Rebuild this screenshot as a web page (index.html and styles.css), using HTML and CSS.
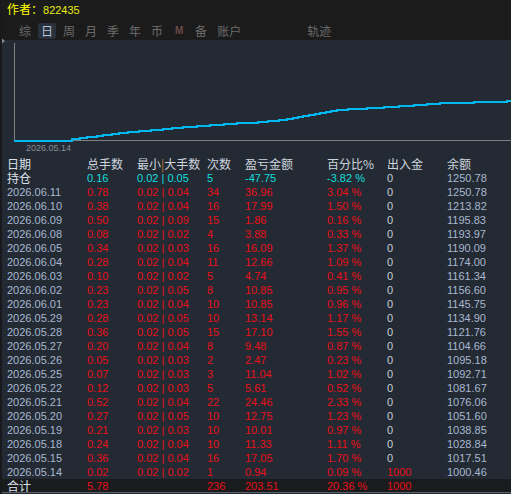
FILE: index.html
```html
<!doctype html>
<html>
 <head>
	<meta charset="UTF-8">
	<title>账户轨迹</title>
	<link rel="stylesheet" href="styles.css">
 </head>
 <body>
	<div class="win">
		<div class="author">作者：<span class="uid">822435</span></div>
		<div class="tabs">
			<span class="tab">综</span>
			<span class="tab tab_on">日</span>
			<span class="tab">周</span>
			<span class="tab">月</span>
			<span class="tab">季</span>
			<span class="tab">年</span>
			<span class="tab">币</span>
			<span class="tab tab_m">M</span>
			<span class="tab">备</span>
			<span class="tab">账户</span>
			<span class="tab tab_far">轨迹</span>
		</div>

		<div class="chart">
			<svg class="curve" width="509" height="103" viewBox="0 0 509 103">
				<line x1="12.5" y1="3" x2="12.5" y2="101" stroke="#7f7f7f" stroke-width="1"/>
				<line x1="12" y1="100.5" x2="509" y2="100.5" stroke="#7f7f7f" stroke-width="1"/>
				<!-- 余额曲线 -->
				<path fill="none" stroke="#00b7f0" stroke-width="2" shape-rendering="crispEdges"
					d="M12,101 H70 V99 H78 V98 H85 V97 H95 V96 H101 V95 H110 V94 H117 V93 H126 V92 H137 V91 H149 V90 H161 V89 H170 V88 H181 V87 H195 V86 H208 V85 H222 V84 H235 V83 H256 V82 H266 V81 H277 V80 H285 V79 H291 V78 H296 V77 H301 V76 H307 V75 H313 V74 H318 V73 H324 V72 H329 V71 H335 V70 H346 V69 H365 V68 H382 V67 H397 V66 H412 V65 H425 V64 H438 V63 H472 V62 H505 V61 H509"/>
			</svg>
			<div class="chart_date">2026.05.14</div>
		</div>

		<div class="list">
			<div class="row row_head">
				<span class="c_big">日期</span><span>总手数</span><span>最小<i class="bar">|</i>大手数</span><span>次数</span><span>盈亏金额</span><span>百分比%</span><span>出入金</span><span>余额</span>
			</div>
			<div class="row row_hold">
				<span class="c_big">持仓</span><span>0.16</span><span>0.02 | 0.05</span><span>5</span><span>-47.75</span><span>-3.82 %</span><span class="c_zero">0</span><span class="c_date">1250.78</span>
			</div>
			<div class="row"><span class="c_date">2026.06.11</span><span>0.78</span><span>0.02 | 0.04</span><span>34</span><span>36.96</span><span>3.04 %</span><span class="c_zero">0</span><span class="c_date">1250.78</span></div>
			<div class="row"><span class="c_date">2026.06.10</span><span>0.38</span><span>0.02 | 0.04</span><span>16</span><span>17.99</span><span>1.50 %</span><span class="c_zero">0</span><span class="c_date">1213.82</span></div>
			<div class="row"><span class="c_date">2026.06.09</span><span>0.50</span><span>0.02 | 0.09</span><span>15</span><span>1.86</span><span>0.16 %</span><span class="c_zero">0</span><span class="c_date">1195.83</span></div>
			<div class="row"><span class="c_date">2026.06.08</span><span>0.08</span><span>0.02 | 0.02</span><span>4</span><span>3.88</span><span>0.33 %</span><span class="c_zero">0</span><span class="c_date">1193.97</span></div>
			<div class="row"><span class="c_date">2026.06.05</span><span>0.34</span><span>0.02 | 0.03</span><span>16</span><span>16.09</span><span>1.37 %</span><span class="c_zero">0</span><span class="c_date">1190.09</span></div>
			<div class="row"><span class="c_date">2026.06.04</span><span>0.28</span><span>0.02 | 0.04</span><span>11</span><span>12.66</span><span>1.09 %</span><span class="c_zero">0</span><span class="c_date">1174.00</span></div>
			<div class="row"><span class="c_date">2026.06.03</span><span>0.10</span><span>0.02 | 0.02</span><span>5</span><span>4.74</span><span>0.41 %</span><span class="c_zero">0</span><span class="c_date">1161.34</span></div>
			<div class="row"><span class="c_date">2026.06.02</span><span>0.23</span><span>0.02 | 0.05</span><span>8</span><span>10.85</span><span>0.95 %</span><span class="c_zero">0</span><span class="c_date">1156.60</span></div>
			<div class="row"><span class="c_date">2026.06.01</span><span>0.23</span><span>0.02 | 0.04</span><span>10</span><span>10.85</span><span>0.96 %</span><span class="c_zero">0</span><span class="c_date">1145.75</span></div>
			<div class="row"><span class="c_date">2026.05.29</span><span>0.28</span><span>0.02 | 0.05</span><span>10</span><span>13.14</span><span>1.17 %</span><span class="c_zero">0</span><span class="c_date">1134.90</span></div>
			<div class="row"><span class="c_date">2026.05.28</span><span>0.36</span><span>0.02 | 0.05</span><span>15</span><span>17.10</span><span>1.55 %</span><span class="c_zero">0</span><span class="c_date">1121.76</span></div>
			<div class="row"><span class="c_date">2026.05.27</span><span>0.20</span><span>0.02 | 0.04</span><span>8</span><span>9.48</span><span>0.87 %</span><span class="c_zero">0</span><span class="c_date">1104.66</span></div>
			<div class="row"><span class="c_date">2026.05.26</span><span>0.05</span><span>0.02 | 0.03</span><span>2</span><span>2.47</span><span>0.23 %</span><span class="c_zero">0</span><span class="c_date">1095.18</span></div>
			<div class="row"><span class="c_date">2026.05.25</span><span>0.07</span><span>0.02 | 0.03</span><span>3</span><span>11.04</span><span>1.02 %</span><span class="c_zero">0</span><span class="c_date">1092.71</span></div>
			<div class="row"><span class="c_date">2026.05.22</span><span>0.12</span><span>0.02 | 0.03</span><span>5</span><span>5.61</span><span>0.52 %</span><span class="c_zero">0</span><span class="c_date">1081.67</span></div>
			<div class="row"><span class="c_date">2026.05.21</span><span>0.52</span><span>0.02 | 0.04</span><span>22</span><span>24.46</span><span>2.33 %</span><span class="c_zero">0</span><span class="c_date">1076.06</span></div>
			<div class="row"><span class="c_date">2026.05.20</span><span>0.27</span><span>0.02 | 0.05</span><span>10</span><span>12.75</span><span>1.23 %</span><span class="c_zero">0</span><span class="c_date">1051.60</span></div>
			<div class="row"><span class="c_date">2026.05.19</span><span>0.21</span><span>0.02 | 0.03</span><span>10</span><span>10.01</span><span>0.97 %</span><span class="c_zero">0</span><span class="c_date">1038.85</span></div>
			<div class="row"><span class="c_date">2026.05.18</span><span>0.24</span><span>0.02 | 0.04</span><span>10</span><span>11.33</span><span>1.11 %</span><span class="c_zero">0</span><span class="c_date">1028.84</span></div>
			<div class="row"><span class="c_date">2026.05.15</span><span>0.36</span><span>0.02 | 0.04</span><span>16</span><span>17.05</span><span>1.70 %</span><span class="c_zero">0</span><span class="c_date">1017.51</span></div>
			<div class="row"><span class="c_date">2026.05.14</span><span>0.02</span><span>0.02 | 0.02</span><span>1</span><span>0.94</span><span>0.09 %</span><span>1000</span><span class="c_date">1000.46</span></div>
			<div class="row row_sum">
				<span class="c_big">合计</span><span>5.78</span><span></span><span>236</span><span>203.51</span><span>20.36 %</span><span>1000</span><span></span>
			</div>
		</div>
	</div>
 </body>
</html>
```

FILE: styles.css
```css
html,body{margin:0;padding:0;background:#232a33}
body{
	font-family:"Liberation Sans","Noto Sans CJK SC",sans-serif;
	font-size:11px;
}

.win{
	position:relative;
	width:509px;height:494px;
	border-left:2px solid #17191c;
	overflow:hidden;
}
/* 左边的小三角 */
.win::before{
	content:"";
	position:absolute;left:-2px;top:37px;
	border-left:5px solid #8a8a8a;
	border-top:4px solid transparent;
	border-bottom:4px solid transparent;
}

/* 标题 + 页签 */
.author{
	height:18px;line-height:18px;
	padding-left:5px;
	background:#1b1b1b;
	color:#ffff00;
	font-size:12px;
	font-family:"Noto Sans CJK SC",sans-serif;
}
.uid{
	font-family:"Liberation Sans",sans-serif;
	font-size:11px;
	color:#e8ec10;
}
.tabs{
	display:flex;gap:4px;
	height:16px;
	padding:5px 0 1px 14px;
	background:#1b1b1b;
}
.tab{
	padding:0 3px;
	line-height:16px;
	font-size:12px;
	font-family:"Noto Sans CJK SC",sans-serif;
	color:#6c6c6c;
	border-radius:2px;
}
.tab_on{background:#29313c;color:#b4c3d6}
.tab_m{
	width:12px;text-align:center;
	font-family:"Liberation Sans",sans-serif;
	font-size:10px;font-weight:bold;
	color:#6b4747;
}
.tab_far{margin-left:56px}

/* 曲线 */
.chart{height:117px}
.curve{display:block}
.chart_date{
	height:14px;line-height:10px;
	padding-left:24px;
	font-size:9px;
	color:#8a909a;
}

/* 列表 */
.row{
	display:grid;
	grid-template-columns:80px 50px 70px 38px 82px 60px 60px 1fr;
	height:14px;line-height:14px;
	padding-left:5px;
	color:#e8101a;
	white-space:nowrap;
}
.row_head{color:#cdd5df;font-size:12px;font-family:"Noto Sans CJK SC",sans-serif}
.bar{font-style:normal;color:#c07a3a}
.row_hold{color:#12dede}
.row_sum{height:13px;background:#1a1b1d;border-bottom:1px solid #5b6069}
.c_big{
	font-size:12px;line-height:14px;
	font-family:"Noto Sans CJK SC",sans-serif;
	color:#dbe1ea;
}
.c_date{color:#a8b8d0}
.c_zero{color:#c9ced6}
```
